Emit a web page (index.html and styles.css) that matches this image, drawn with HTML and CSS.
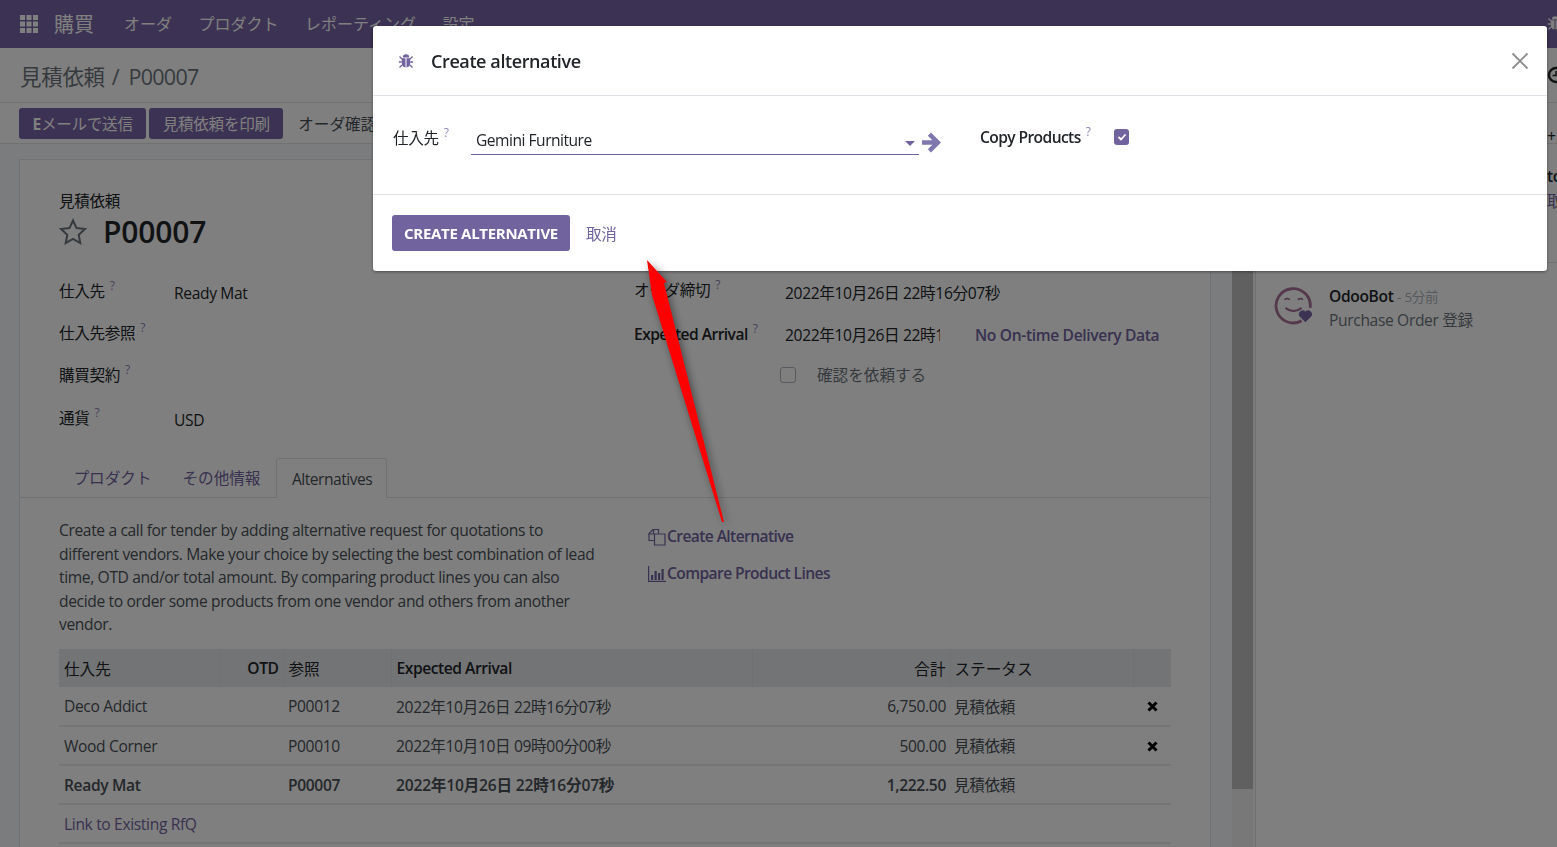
FILE: index.html
```html
<!DOCTYPE html>
<html lang="ja">
  <head>
    <meta charset="UTF-8" />
    <title>P00007 - 購買</title>
    <link rel="stylesheet" href="styles.css">
  </head>
  <body>
    <div class="page">
      <nav class="navbar">
        <svg class="apps" width="18" height="18" viewBox="0 0 18 18" fill="currentColor">
          <rect x="0" y="0" width="5" height="5"/><rect x="6.5" y="0" width="5" height="5"/><rect x="13" y="0" width="5" height="5"/>
          <rect x="0" y="6.5" width="5" height="5"/><rect x="6.5" y="6.5" width="5" height="5"/><rect x="13" y="6.5" width="5" height="5"/>
          <rect x="0" y="13" width="5" height="5"/><rect x="6.5" y="13" width="5" height="5"/><rect x="13" y="13" width="5" height="5"/>
        </svg>
        <span class="brand">購買</span>
        <a>オーダ</a>
        <a>プロダクト</a>
        <a>レポーティング</a>
        <a>設定</a>
        <svg class="nav-bug" width="16" height="16" viewBox="0 0 16 16"><use href="#bug"/></svg>
      </nav>

      <div class="control-panel">
        <div class="breadcrumb">見積依頼<span class="slash">/</span><span class="crumb-id">P00007</span></div>
        <svg class="clock" width="18" height="18" viewBox="0 0 18 18" fill="none" stroke="currentColor" stroke-width="2.4">
          <circle cx="9" cy="9" r="7"/><path d="M9 5v4.5H5.5" stroke-width="1.5"/>
        </svg>
      </div>

      <div class="statusbar">
        <button class="btn"><b>E</b>メールで送信</button>
        <button class="btn">見積依頼を印刷</button>
        <button class="btn-plain">オーダ確認</button>
      </div>

      <div class="content">
        <div class="form-area">
          <div class="sheet">
            <div class="sheet-title">
              <div class="title-label">見積依頼</div>
              <h1>
                <svg width="28" height="28" viewBox="0 0 28 28" fill="none" stroke="currentColor" stroke-width="2">
                  <path d="M14 2.5l3.5 7.6 8.3 1-6.1 5.7 1.6 8.2-7.3-4.1-7.3 4.1 1.6-8.2-6.1-5.7 8.3-1z"/>
                </svg>
                P00007
              </h1>
            </div>

            <div class="groups">
              <div class="group-left">
                <div class="field"><label>仕入先<sup>?</sup></label><span>Ready Mat</span></div>
                <div class="field"><label>仕入先参照<sup>?</sup></label></div>
                <div class="field"><label>購買契約<sup>?</sup></label></div>
                <div class="field"><label>通貨<sup>?</sup></label><span>USD</span></div>
              </div>
              <div class="group-right">
                <div class="field"><label>オーダ締切<sup>?</sup></label><span>2022年10月26日 22時16分07秒</span></div>
                <div class="field">
                  <label class="strong">Expected Arrival<sup>?</sup></label>
                  <span class="date-cut">2022年10月26日 22時16</span>
                  <span class="otd">No On-time Delivery Data</span>
                </div>
                <div class="confirm"><i class="checkbox"></i><span>確認を依頼する</span></div>
              </div>
            </div>

            <ul class="tabs">
              <li>プロダクト</li>
              <li>その他情報</li>
              <li class="active">Alternatives</li>
            </ul>

            <div class="tab-body">
              <div class="alt-top">
                <p>Create a call for tender by adding alternative request for quotations to different vendors. Make your choice by selecting the best combination of lead time, OTD and/or total amount. By comparing product lines you can also decide to order some products from one vendor and others from another vendor.</p>
                <div class="alt-links">
                  <a>
                    <svg width="18" height="18" viewBox="0 0 18 18" fill="none" stroke="currentColor" stroke-width="1.2">
                      <path d="M6 12.500H1V5.500L5 1.500h5.500v4"/><path d="M6.500 6h10.500v11H6.500z"/><path d="M5.500 1.500v4.500H1"/>
                    </svg>Create Alternative
                  </a>
                  <a>
                    <svg width="18" height="18" viewBox="0 0 18 18" fill="currentColor">
                      <path d="M0 1h1.200v14.800H18V17H0z"/><rect x="3" y="10" width="2.200" height="5"/><rect x="6.500" y="6" width="2.200" height="9"/><rect x="10" y="8" width="2.200" height="7"/><rect x="13.500" y="4" width="2.200" height="11"/>
                    </svg>Compare Product Lines
                  </a>
                </div>
              </div>

              <table class="alt-table">
                <colgroup>
                  <col class="c-vendor"><col class="c-otd"><col class="c-ref"><col class="c-date"><col class="c-total"><col class="c-status"><col class="c-del">
                </colgroup>
                <thead>
                  <tr>
                    <th>仕入先</th><th class="num latin">OTD</th><th>参照</th><th class="latin">Expected Arrival</th><th class="num">合計</th><th class="status">ステータス</th><th></th>
                  </tr>
                </thead>
                <tbody>
                  <tr>
                    <td>Deco Addict</td><td></td><td>P00012</td><td>2022年10月26日 22時16分07秒</td><td class="num">6,750.00</td><td class="status">見積依頼</td>
                    <td class="del"><svg width="11" height="11" viewBox="0 0 11 11"><path d="M1.5 1.5l8 8M9.5 1.5l-8 8" stroke="#000" stroke-width="3"/></svg></td>
                  </tr>
                  <tr>
                    <td>Wood Corner</td><td></td><td>P00010</td><td>2022年10月10日 09時00分00秒</td><td class="num">500.00</td><td class="status">見積依頼</td>
                    <td class="del"><svg width="11" height="11" viewBox="0 0 11 11"><path d="M1.5 1.5l8 8M9.5 1.5l-8 8" stroke="#000" stroke-width="3"/></svg></td>
                  </tr>
                  <tr class="current">
                    <td>Ready Mat</td><td></td><td>P00007</td><td class="cur-date">2022年10月26日 22時16分07秒</td><td class="num">1,222.50</td><td class="status normal">見積依頼</td><td></td>
                  </tr>
                  <tr>
                    <td colspan="7" class="add-line">Link to Existing RfQ</td>
                  </tr>
                </tbody>
              </table>
            </div>
          </div>
        </div>

        <div class="scroll-track"><div class="scroll-thumb"></div></div>

        <aside class="chatter">
          <div class="chatter-tools">
            <span class="tool-plus">+</span>
            <span class="tool-to">to</span>
            <span class="tool-cancel">取</span>
          </div>
          <div class="message">
            <svg class="avatar" width="40" height="40" viewBox="0 0 42 42" fill="none" stroke="#a9739b" stroke-width="3">
              <path d="M29 37.5A18 18 0 1 1 38 24"/>
              <path d="M11 15.5q3-2.5 5.5 0M25 15.5q3-2.5 5.5 0" stroke-width="1.8"/>
              <path d="M12 24q8.5 7 17 0" stroke-width="2.2"/>
              <path d="M33 39l-6.5-6.5a4 4 0 0 1 6.5-4.500a4 4 0 0 1 6.5 4.500z" fill="#7864a6" stroke="none"/>
            </svg>
            <div>
              <div><b class="author">OdooBot</b> <span class="when">- 5分前</span></div>
              <div class="msg-body">Purchase Order 登録</div>
            </div>
          </div>
        </aside>
      </div>
    </div>

    <div class="backdrop"></div>

    <div class="modal">
      <header class="modal-head">
        <svg class="modal-bug" width="16" height="16" viewBox="0 0 16 16"><use href="#bug"/></svg>
        <h4>Create alternative</h4>
        <svg class="modal-close" width="18" height="18" viewBox="0 0 18 18" stroke="#8c8c8c" stroke-width="1.8"><path d="M1.5 1.5l15 15M16.5 1.5l-15 15"/></svg>
      </header>
      <div class="modal-body">
        <label class="m-label">仕入先<sup>?</sup></label>
        <div class="m-input">
          Gemini Furniture
          <i class="caret"></i>
        </div>
        <svg class="m-arrow" width="21" height="21" viewBox="0 0 21 20" fill="#7f78ae">
          <path d="M10 0l10 10-10 10-3.2-3.2 4.5-4.500H1V7.700h10.300L6.800 3.200z"/>
        </svg>
        <label class="m-label m-copy">Copy Products<sup>?</sup></label>
        <span class="m-check">
          <svg width="10" height="10" viewBox="0 0 10 10" fill="none" stroke="#fff" stroke-width="1.8"><path d="M1.5 5l2.5 2.500 4.500-5"/></svg>
        </span>
      </div>
      <footer class="modal-foot">
        <button class="btn-primary">Create Alternative</button>
        <a class="cancel">取消</a>
      </footer>
    </div>

    <!-- red annotation pointing at the modal button -->
    <svg class="annotation" width="1557" height="847" viewBox="0 0 1557 847">
      <polygon points="647,260 667,282 664,283 724,522 722,522 652,295" fill="#ff0000"/>
    </svg>

    <svg width="0" height="0" class="defs">
      <symbol id="bug" viewBox="0 0 16 16">
        <g fill="currentColor">
          <path d="M4.800 4.500a3.200 3.200 0 0 1 6.400 0z"/>
          <path d="M3.800 5.300h3.700v9.200c-2.200-.2-3.700-1.800-3.700-4.200zM8.500 5.300h3.700v5c0 2.400-1.500 4-3.700 4.200z"/>
        </g>
        <path d="M1.500 3.500l2.500 2.500M14.500 3.500L12 6M0.800 9h3M15.200 9h-3M1.500 14.500l2.500-2.500M14.500 14.500L12 12" stroke="currentColor" stroke-width="1.300" fill="none"/>
      </symbol>
    </svg>
  </body>
</html>
```

FILE: styles.css
```css
* {
  box-sizing: border-box;
}
html,
body {
  margin: 0;
  height: 100%;
  overflow: hidden;
}
body {
  font-family: "Open Sans", "Noto Sans CJK JP", sans-serif;
  font-size: 15.6px;
  letter-spacing: -0.35px;
  color: #212529;
  background: #fff;
}
h1,
h4,
p,
ul {
  margin: 0;
  padding: 0;
}
sup {
  font-size: 12px;
  color: #8f85b8;
  margin-left: 5px;
  line-height: 0;
  vertical-align: 7px;
  font-weight: 400;
}
.page {
  width: 1557px;
  height: 847px;
  overflow: hidden;
  display: flex;
  flex-direction: column;
}

/* top bar */
.navbar {
  height: 48px;
  flex: none;
  background: #7864a6;
  color: #fff;
  display: flex;
  align-items: center;
  padding-left: 20px;
  font-size: 16px;
  letter-spacing: 0;
}
.navbar a {
  margin: -2px 26.5px 0 0;
}
.brand {
  font-size: 20px;
  margin: -1px 30px 0 16px;
}
.nav-bug {
  margin-left: auto;
  margin-right: -6px;
  margin-top: -2px;
  color: #fff;
}

.control-panel {
  height: 55px;
  flex: none;
  background: #fff;
  display: flex;
  align-items: center;
  justify-content: space-between;
  padding-left: 20px;
  border-bottom: 1px solid #dee2e6;
}
.breadcrumb {
  font-size: 21.5px;
  letter-spacing: -0.3px;
  color: #6c757d;
}
.slash {
  margin: 0 9px 0 7px;
}
.crumb-id {
  letter-spacing: -0.7px;
}
.clock {
  margin-right: -8px;
  color: #212529;
}
.statusbar {
  height: 41px;
  flex: none;
  background: #fff;
  display: flex;
  align-items: center;
  padding-left: 19px;
  padding-top: 1px;
  gap: 3px;
  border-bottom: 1px solid #dee2e6;
}
.btn {
  height: 31px;
  border: none;
  border-radius: 3px;
  background: #7864a6;
  color: #fff;
  font: inherit;
  font-size: 15.6px;
  padding: 0 13.5px;
  letter-spacing: -0.3px;
}
.btn-plain {
  border: none;
  background: none;
  font: inherit;
  font-size: 15.6px;
  color: #495057;
  margin-left: 12px;
  padding: 0;
}

/* form */
.content {
  flex: 1;
  display: flex;
  min-height: 0;
  background: #f6f8fa;
}
.form-area {
  width: 1232px;
  flex: none;
  padding: 15px 21px 0 19px;
}
.sheet {
  background: #fff;
  border: 1px solid #dee2e6;
  height: 800px;
}
.sheet-title {
  padding: 31px 39px 0;
  height: 110px;
}
.title-label {
  color: #212529;
  line-height: 21px;
}
h1 {
  font-size: 30px;
  font-weight: 600;
  letter-spacing: -0.15px;
  line-height: 40px;
  display: flex;
  align-items: center;
  gap: 16px;
}
h1 svg {
  color: #6c757d;
}
.groups {
  display: flex;
  padding: 0 0 0 39px;
  height: 188px;
}
.group-left {
  width: 575px;
}
.group-left .field {
  height: 42px;
  display: flex;
  padding-top: 9px;
}
.group-left .field:last-child {
  padding-top: 10px;
}
.group-left label {
  width: 115px;
  flex: none;
}
.group-left span {
  padding-top: 3px;
}
.group-right {
  margin-top: -1px;
}
.group-right .field {
  height: 42px;
  display: flex;
  padding-top: 9px;
}
.group-right label {
  width: 151px;
  flex: none;
}
.group-right span {
  padding-top: 3px;
}
.group-right .strong {
  font-weight: 600;
  letter-spacing: -0.55px;
  padding-top: 3px;
}
.date-cut {
  width: 155px;
  overflow: hidden;
  white-space: nowrap;
  flex: none;
}
.group-right .otd {
  margin-left: 35px;
  padding-top: 4px;
  color: #71639e;
  font-weight: 600;
  letter-spacing: -0.35px;
}
.confirm {
  display: flex;
  align-items: center;
  margin-left: 146px;
  gap: 21px;
  padding-top: 10px;
  color: #6c757d;
  letter-spacing: 0;
}
.group-right .confirm span {
  padding-top: 0;
}
.checkbox {
  width: 16px;
  height: 16px;
  border: 1px solid #adb5bd;
  border-radius: 3px;
  background: #fff;
}
.tabs {
  list-style: none;
  display: flex;
  height: 40px;
  padding-left: 38px;
  border-bottom: 1px solid #dee2e6;
  letter-spacing: 0;
}
.tabs li {
  padding: 8px 15.5px 0;
  color: #71639e;
  height: 40px;
}
.tabs .active {
  color: #495057;
  background: #fff;
  border: 1px solid #dee2e6;
  border-bottom: none;
  border-radius: 3px 3px 0 0;
  padding: 9px 14px 0 15px;
  letter-spacing: -0.5px;
}
.tab-body {
  padding: 21px 38px 0 39px;
}
.alt-top {
  display: flex;
  height: 130px;
}
.alt-top p {
  width: 545px;
  line-height: 23.5px;
  color: #495057;
  letter-spacing: -0.36px;
}
.alt-links {
  margin-left: 44px;
  padding-top: 7px;
  display: flex;
  flex-direction: column;
  gap: 16px;
}
.alt-links a {
  color: #71639e;
  font-weight: 600;
  letter-spacing: -0.6px;
  display: flex;
  align-items: center;
  gap: 1px;
  line-height: 21px;
}
.alt-table {
  width: 1112px;
  table-layout: fixed;
  border-collapse: collapse;
}
.c-vendor { width: 160px; }
.c-otd { width: 64px; }
.c-ref { width: 108px; }
.c-date { width: 361px; }
.c-total { width: 198px; }
.c-status { width: 183px; }
.c-del { width: 38px; }
.alt-table th {
  height: 38px;
  background: #e6e9ec;
  border-left: 1px solid #dee2e6;
  padding: 0 5px;
  font-weight: 400;
  letter-spacing: 0;
  text-align: left;
  color: #212529;
}
.alt-table th:first-child {
  border-left: none;
}
.alt-table th.latin {
  font-weight: 600;
  letter-spacing: -0.45px;
}
.alt-table td {
  height: 39px;
  padding: 0 5px;
  border-bottom: 2px solid #e8eaec;
  color: #495057;
  white-space: nowrap;
}
.alt-table .num {
  text-align: right;
  padding-right: 4px;
}
.alt-table .status {
  padding-left: 4px;
}
.alt-table .current td {
  font-weight: 600;
}
.alt-table .current .normal {
  font-weight: 400;
}
.alt-table .current .cur-date {
  letter-spacing: -0.2px;
}
.del {
  text-align: center;
}
.alt-table .add-line {
  color: #71639e;
}

/* right side */
.scroll-track {
  width: 21px;
  flex: none;
  background: #f1f1f1;
  height: 100%;
}
.scroll-thumb {
  height: 645px;
  background: #c1c1c1;
}
.chatter {
  flex: 1;
  margin-left: 2px;
  background: #fff;
  border-left: 1px solid #dee2e6;
}
.chatter-tools {
  height: 119px;
  padding-left: 291px;
  border-bottom: 1px solid #dee2e6;
  display: flex;
  flex-direction: column;
  white-space: nowrap;
}
.tool-plus {
  margin-top: -19px;
}
.tool-to {
  margin-top: 18px;
  font-weight: 600;
}
.tool-cancel {
  margin-top: 2px;
  color: #71639e;
}
.message {
  display: flex;
  gap: 15px;
  padding: 22px 0 0 18px;
  line-height: 22.5px;
}
.avatar {
  flex: none;
}
.author {
  font-weight: 600;
  color: #212529;
}
.when {
  font-size: 13.5px;
  color: #adb5bd;
}
.msg-body {
  color: #6c757d;
}

/* dialog */
.backdrop {
  position: fixed;
  inset: 0;
  background: rgba(0, 0, 0, 0.5);
}
.modal {
  position: fixed;
  left: 373px;
  top: 26px;
  width: 1174px;
  height: 245px;
  background: #fff;
  border-radius: 3px;
  box-shadow: 0 1px 3px rgba(0, 0, 0, 0.4);
}
.modal-head {
  height: 70px;
  display: flex;
  align-items: center;
  padding-left: 25px;
  border-bottom: 1px solid #dee2e6;
}
.modal-bug {
  color: #71639e;
}
h4 {
  font-size: 18px;
  font-weight: 600;
  letter-spacing: -0.4px;
  margin-left: 17px;
}
.modal-close {
  margin-left: auto;
  margin-right: 18px;
}
.modal-body {
  height: 99px;
  display: flex;
  align-items: flex-start;
  padding: 30px 0 0 20px;
  border-bottom: 1px solid #dee2e6;
}
.m-label {
  width: 78px;
  flex: none;
}
.m-input {
  width: 448px;
  height: 29px;
  padding: 3px 0 0 5px;
  border-bottom: 1px solid #71639e;
  display: flex;
  justify-content: space-between;
  letter-spacing: -0.5px;
}
.caret {
  width: 0;
  height: 0;
  border: 5px solid transparent;
  border-top-color: #71639e;
  border-bottom: none;
  margin: 12px 4px 0 0;
}
.m-arrow {
  margin: 6px 0 0 2px;
}
.m-copy {
  width: auto;
  margin-left: 38px;
  font-weight: 600;
  letter-spacing: -0.6px;
}
.m-check {
  width: 15px;
  height: 16px;
  margin: 3px 0 0 24px;
  background: #71639e;
  border-radius: 3px;
  display: flex;
  align-items: center;
  justify-content: center;
}
.modal-foot {
  display: flex;
  align-items: center;
  padding: 20px 0 0 19px;
  gap: 16px;
}
.btn-primary {
  height: 36px;
  width: 178px;
  border: none;
  border-radius: 3px;
  background: #71639e;
  color: #fff;
  font: inherit;
  font-weight: 700;
  font-size: 15px;
  letter-spacing: -0.3px;
  text-transform: uppercase;
  padding: 0;
}
.cancel {
  color: #71639e;
}
.annotation {
  position: fixed;
  left: 0;
  top: 0;
  pointer-events: none;
  filter: drop-shadow(2px 2px 4px rgba(0, 0, 0, 0.45));
}
.defs {
  position: absolute;
}
```
